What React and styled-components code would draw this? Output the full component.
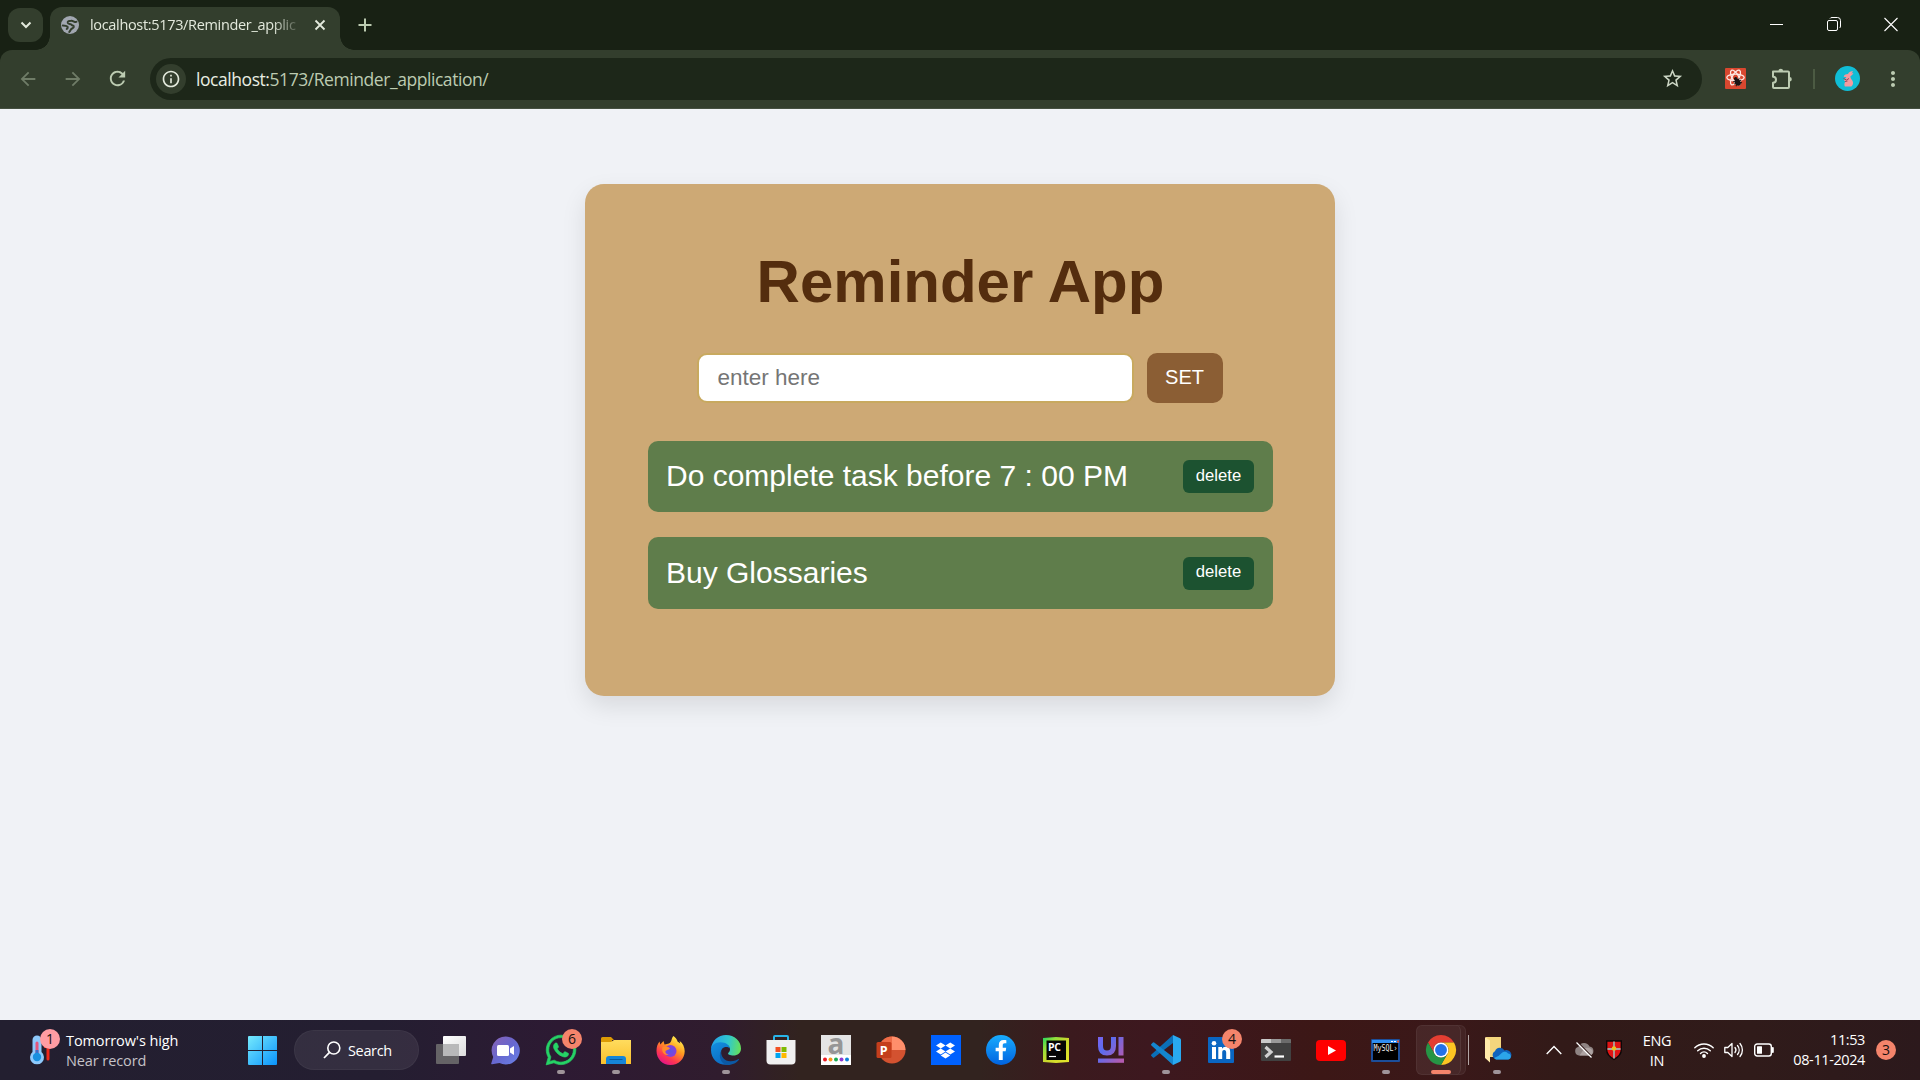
import React from "react";
import styled, { createGlobalStyle, css } from "styled-components";
import { MdArrowBack, MdArrowForward, MdRefresh, MdInfoOutline, MdStarOutline, MdMoreVert } from "react-icons/md";
import { FaWhatsapp, FaDropbox, FaFacebookF } from "react-icons/fa";

const Global = createGlobalStyle`
  * { box-sizing: border-box; }
  body { margin: 0; background: #f0f2f6; overflow: hidden; }
  svg { display: block; flex: none; overflow: visible; }
`;

const ui = css`font-family: "Open Sans", "Noto Sans", sans-serif;`;
const arial = css`font-family: "Liberation Sans", Arial, sans-serif;`;

const Screen = styled.div`
  width: 1920px;
  height: 1080px;
  display: flex;
  flex-direction: column;
  overflow: hidden;
`;

/* Browser chrome */
const TabStrip = styled.div`
  height: 50px;
  flex: none;
  display: flex;
  align-items: flex-start;
  background: #182114;
  padding: 7px 0 0 8px;
`;
const TabSearch = styled.div`
  width: 35px;
  height: 34px;
  margin: 1px 7px 0 0;
  border-radius: 12px;
  background: #333e2d;
  display: flex;
  align-items: center;
  justify-content: center;
`;
const Tab = styled.div`
  position: relative;
  width: 290px;
  height: 43px;
  border-radius: 12px 12px 0 0;
  background: #333e2d;
  display: flex;
  align-items: center;
  padding: 0 14px 7px 11px;
  &::before, &::after {
    content: "";
    position: absolute;
    bottom: 0;
    width: 14px;
    height: 14px;
  }
  &::before { left: -14px; background: radial-gradient(circle at 0 0, transparent 13.5px, #333e2d 14px); }
  &::after { right: -14px; background: radial-gradient(circle at 100% 0, transparent 13.5px, #333e2d 14px); }
`;
const TabTitle = styled.div`
  ${ui}
  width: 212px;
  margin-left: 11px;
  font-size: 14.5px;
  letter-spacing: -0.33px;
  line-height: 20px;
  color: #e3e9dc;
  white-space: nowrap;
  mask-image: linear-gradient(90deg, #000 182px, transparent 212px);
`;
const TabClose = styled.div`margin-left: auto;`;
const NewTab = styled.div`margin: 11px 0 0 18px;`;
const WindowButtons = styled.div`
  margin: 10px 22px 0 auto;
  display: flex;
  gap: 43px;
`;
const ToolbarBack = styled.div`
  flex: none;
  height: 59px;
  background: #182114;
`;
const Toolbar = styled.div`
  height: 59px;
  border-radius: 12px 12px 0 0;
  background: #333e2d;
  border-bottom: 1px solid #454f40;
  display: flex;
  align-items: center;
  padding: 0 15px 1px 16px;
`;
const NavIcon = styled.div`
  width: 23px;
  margin-right: 22px;
  display: flex;
  justify-content: center;
  color: ${(p) => (p.$dim ? "#6f7c67" : "#bccbb1")};
`;
const AddressBar = styled.div`
  width: 1552px;
  height: 42px;
  margin-left: -1px;
  border-radius: 21px;
  background: #1d2719;
  display: flex;
  align-items: center;
  padding: 0 18px 0 6px;
`;
const SiteInfo = styled.div`
  width: 30px;
  height: 30px;
  border-radius: 50%;
  background: #333e2d;
  display: flex;
  align-items: center;
  justify-content: center;
  color: #e3e9dc;
`;
const Url = styled.div`
  ${ui}
  margin-left: 10px;
  font-size: 17.5px;
  letter-spacing: -0.44px;
  white-space: nowrap;
  color: #bccbb1;
  b { font-weight: 400; color: #e9eee2; }
`;
const StarSlot = styled.div`margin-left: auto; color: #ccd6c4;`;
const Extensions = styled.div`
  display: flex;
  align-items: center;
  margin-left: auto;
`;
const Separator = styled.div`
  width: 2px;
  height: 20px;
  background: #4c5b43;
  margin: 0 20px 0 20px;
`;

/* Page */
const Page = styled.main`
  flex: 1;
  display: flex;
  justify-content: center;
  align-items: flex-start;
  padding-top: 75px;
  background: #f0f2f6;
`;
const Card = styled.section`
  ${arial}
  width: 750px;
  height: 512px;
  border-radius: 19px;
  background: #cda975;
  box-shadow: 0 10px 25px rgba(0, 0, 0, 0.1);
  padding: 63px 62px 0 63px;
`;
const Heading = styled.h1`
  margin: 0;
  font-size: 60px;
  line-height: 69px;
  font-weight: 700;
  text-align: center;
  color: #542d0e;
`;
const Form = styled.form`
  display: flex;
  align-items: center;
  justify-content: center;
  gap: 13px;
  margin: 37px 2px 0 0;
  height: 50px;
`;
const Field = styled.input`
  ${arial}
  width: 437px;
  height: 50px;
  border: 2px solid #c8a95f;
  border-radius: 10px;
  background: #fff;
  padding: 0 18px 1px 19px;
  font-size: 22.5px;
  outline: none;
  &::placeholder { color: #757575; opacity: 1; }
`;
const SetButton = styled.button`
  ${arial}
  width: 76px;
  height: 50px;
  border: 0;
  border-radius: 10px;
  background: #8b5e34;
  color: #fff;
  font-size: 20px;
  padding: 0 0 1px;
`;
const List = styled.ul`
  list-style: none;
  margin: 38px 0 0;
  padding: 0;
  display: flex;
  flex-direction: column;
  gap: 25px;
`;
const Item = styled.li`
  height: 71px;
  border-radius: 10px;
  background: #5f7d4b;
  color: #fff;
  display: flex;
  align-items: center;
  justify-content: space-between;
  padding: 0 19px 0 18px;
  font-size: 30px;
  &:nth-child(2) { height: 72px; }
`;
const ItemText = styled.span`
  line-height: 34px;
  padding-bottom: 1px;
`;
const DeleteButton = styled.button`
  ${arial}
  width: 71px;
  height: 33px;
  border: 0;
  border-radius: 6px;
  background: #1c5230;
  color: #fff;
  font-size: 16.67px;
  padding: 0 0 2px;
`;

/* Taskbar */
const Taskbar = styled.footer`
  ${ui}
  height: 60px;
  flex: none;
  display: flex;
  align-items: center;
  color: #fff;
  background: linear-gradient(90deg, #231f30 0, #241e31 380px, #2d1a33 560px, #301c2e 720px, #32231f 800px, #32231f 980px, #3b1a1e 1070px, #3d181f 1150px, #3c1716 1320px, #3a1819 1450px, #321a18 1560px, #301b1a 1750px, #2c191c 1920px);
`;
const Weather = styled.div`
  display: flex;
  align-items: center;
  width: 234px;
  padding-left: 26px;
`;
const WeatherIcon = styled.div`
  position: relative;
  width: 40px;
  height: 46px;
  display: flex;
  align-items: center;
`;
const Lines = styled.div`
  display: flex;
  flex-direction: column;
  align-items: ${(p) => p.$align || "flex-start"};
  white-space: nowrap;
  font-size: ${(p) => p.$size || 14}px;
  letter-spacing: ${(p) => p.$track || 0}px;
  line-height: 20px;
  padding-top: ${(p) => p.$drop || 0}px;
`;
const Muted = styled.span`color: #c5c3c8;`;
const Start = styled.div`
  width: 60px;
  padding-left: 14px;
`;
const Search = styled.div`
  width: 125px;
  height: 40px;
  border-radius: 20px;
  background: rgba(255, 255, 255, 0.075);
  border: 1px solid rgba(255, 255, 255, 0.04);
  display: flex;
  align-items: center;
  gap: 7px;
  padding-left: 28px;
  font-size: 14.5px;
  letter-spacing: -0.35px;
`;
const Apps = styled.div`
  display: flex;
  margin-left: 4px;
`;
const Slot = styled.div`
  position: relative;
  width: 55px;
  height: 60px;
  flex: none;
  display: flex;
  align-items: center;
  justify-content: center;
  &::after {
    content: "";
    position: absolute;
    bottom: 6px;
    width: ${(p) => (p.$active ? 20 : 8)}px;
    height: 4px;
    border-radius: 2px;
    background: ${(p) => (p.$active ? "#f4846b" : p.$running ? "#9f949a" : "transparent")};
  }
`;
const ActiveTile = styled.div`
  position: relative;
  width: 50px;
  height: 50px;
  border-radius: 6px;
  background: rgba(255, 255, 255, 0.05);
  border: 1px solid rgba(255, 255, 255, 0.05);
  display: flex;
  align-items: center;
  padding-left: 9px;
  &::after {
    content: "";
    position: absolute;
    top: -1px;
    left: -1px;
    width: 44px;
    height: 50px;
    border-radius: 6px;
    background: rgba(255, 255, 255, 0.02);
    border-right: 1px solid rgba(255, 255, 255, 0.08);
  }
`;
const Badge = styled.div`
  position: absolute;
  ${(p) => p.$pos}
  width: 20px;
  height: 20px;
  border-radius: 50%;
  background: ${(p) => p.$color || "#f4846b"};
  color: #151010;
  font-size: 14px;
  line-height: 19px;
  text-align: center;
`;
const WindowDivider = styled.div`
  width: 1px;
  height: 30px;
  align-self: center;
  background: #b3a6a6;
`;
const Tray = styled.div`
  display: flex;
  align-items: center;
  margin-left: auto;
  padding-right: 24px;
`;
const TrayItem = styled.div`
  flex: none;
  display: flex;
  margin-left: ${(p) => p.$ml}px;
`;
const Language = styled.div`
  width: 40px;
  margin-left: 15px;
`;
const Clock = styled.div`
  width: 80px;
  margin-left: 12px;
  padding-right: 1px;
`;
const Count = styled.div`
  width: 20px;
  height: 20px;
  margin-left: 10px;
  border-radius: 50%;
  background: #f4846b;
  color: #151010;
  font-size: 14px;
  line-height: 20px;
  text-align: center;
`;

const Svg = ({ w = 30, h = w, vb, children, ...rest }) => (
  <svg width={w} height={h} viewBox={vb || `0 0 ${w} ${h}`} fill="none" {...rest}>{children}</svg>
);

const Globe = () => (
  <Svg w={18}>
    <circle cx="9" cy="9" r="9" fill="#a2a7b1" />
    <path d="M15.500 5.800C14 7 12.500 4.500 10 4.800 7.500 5 6.300 5.600 6.800 7c.5 1.300 3 .6 3.800 1.800.6 1 2.600.6 2.200 2.200-.4 1.200-2 1.300-2.800 2.300-.6.800-.8 2-1.800 2.700M1.800 9.500c1.500 0 3.700 0 4.700 1.200.6.800-.1 1.800-.8 2.300" stroke="#333e2d" strokeWidth="2" strokeLinecap="round" />
  </Svg>
);
const ReactExtension = () => (
  <Svg w={21}>
    <rect width="21" height="21" rx="1" fill="#d9472f" />
    <g stroke="#ffe9e4" strokeWidth="1.300">
      <ellipse cx="10.5" cy="9.500" rx="8.700" ry="3.300" />
      <ellipse cx="10.5" cy="9.500" rx="8.200" ry="3.300" transform="rotate(60 10.5 9.5)" />
      <ellipse cx="10.5" cy="9.500" rx="8.200" ry="3.300" transform="rotate(120 10.5 9.5)" />
    </g>
    <g transform="rotate(-30 12 13)" fill="#1a1413">
      <ellipse cx="12" cy="14.500" rx="2.800" ry="3.600" />
      <circle cx="12" cy="10.300" r="1.700" />
      <path d="M8.500 11.500l7 5.500M15.500 11.500l-7 5.500M8 14.300h8" stroke="#1a1413" strokeWidth=".9" />
    </g>
  </Svg>
);
const Puzzle = () => (
  <Svg w={22}>
    <path d="M2 3.500h15a1 1 0 0 1 1 1V19a1 1 0 0 1-1 1H3a1 1 0 0 1-1-1v-4.200a3 3 0 0 0 0-6z" stroke="#bccbb1" strokeWidth="2" strokeLinejoin="round" />
    <path d="M7.500 3a2.300 2.300 0 0 1 4.600 0zM18.500 9a2.300 2.300 0 0 1 0 4.600z" fill="#bccbb1" />
  </Svg>
);
const Avatar = () => (
  <Svg w={25}>
    <circle cx="12.5" cy="12.5" r="12.5" fill="#10bdd6" />
    <path d="M18 5.500c-2-.5-4 .5-5 2.500-2 0-3.500.8-4.300 2.200.4.800 1.500 1 2.600.9-.6 1.300-1.800 2-2.300 3.500l1.500.7c-1 1.600-1.600 3.500-.6 5.200h6.500c2-1.600 2.300-4.500.6-6.500-1-1.200-1.700-2.300-1.600-3.800 1.500-1 2.700-2 3-3.200-1 .1-1.700.4-2.400.8.8-.7 1.500-1.400 2-2.300z" fill="#f29aa0" />
    <path d="M8.500 12.500l3 1.500 2.500-1.500M10 15.500l2.500-.5" stroke="#94475a" />
  </Svg>
);

const Thermometer = () => (
  <Svg w={24} h={30}>
    <path d="M22 9v15" stroke="#f0261a" strokeWidth="3" strokeLinecap="round" />
    <path d="M18 12h6" stroke="#f0261a" strokeWidth="2" />
    <path d="M6.500 5.500a4.500 4.500 0 0 1 9 0v12a7 7 0 1 1-9 0z" transform="translate(0 -.5)" fill="#8ec9fb" />
    <path d="M11 8v14" stroke="#e4577c" strokeWidth="3" strokeLinecap="round" />
    <path d="M11 15v7" stroke="#3c6ec7" strokeWidth="3" />
    <circle cx="11" cy="22" r="4.200" fill="#1990df" />
  </Svg>
);
const WindowsLogo = () => (
  <Svg w={29}>
    <defs><linearGradient id="win" x1="0" y1="0" x2="29" y2="29" gradientUnits="userSpaceOnUse"><stop stopColor="#76eafd" /><stop offset="1" stopColor="#0a93fb" /></linearGradient></defs>
    <path d="M1 0h13v14H0V1a1 1 0 0 1 1-1zM15 0h13a1 1 0 0 1 1 1v13H15zM0 15h14v14H1a1 1 0 0 1-1-1zM15 15h14v13a1 1 0 0 1-1 1H15z" fill="url(#win)" />
  </Svg>
);
const TaskView = () => (
  <Svg w={30} h={28}>
    <defs><linearGradient id="tv" x1="0" y1="0" x2="1" y2="1"><stop stopColor="#fff" /><stop offset="1" stopColor="#dcdcdc" /></linearGradient></defs>
    <rect y="8" width="23" height="20" rx="1" fill="#656366" />
    <rect x="7" width="23" height="20" rx="1" fill="url(#tv)" />
    <path d="M7 8h16v12H7z" fill="#b8b8b9" />
  </Svg>
);
const Chat = () => (
  <Svg w={29}>
    <defs><linearGradient id="chat" x1="0" y1="0" x2="1" y2="1"><stop stopColor="#8a62b4" /><stop offset=".5" stopColor="#6767cf" /><stop offset="1" stopColor="#6a83e8" /></linearGradient></defs>
    <path d="M14.500 0.500a14 14 0 1 1-6 26.500L1 28.200c-.8.100-1-.3-.7-1L2.200 21A14 14 0 0 1 14.500.5z" fill="url(#chat)" />
    <rect x="6" y="9" width="12" height="11" rx="1.500" fill="#fff" />
    <path d="M19 12.500l4-2.500v9l-4-2.500z" fill="#fff" />
  </Svg>
);
const Folder = () => (
  <Svg w={30} h={27}>
    <defs><linearGradient id="fold" x1="0" y1="0" x2="0" y2="1"><stop stopColor="#ffdc5e" /><stop offset="1" stopColor="#fbc02c" /></linearGradient></defs>
    <path d="M0 1.500A1.500 1.500 0 0 1 1.500 0H10l3 3h-2v4H0z" fill="#dc9b05" />
    <path d="M0 5h10l3-2h17v24H0z" fill="url(#fold)" />
    <path d="M5 27v-5a3 3 0 0 1 3-3h14a3 3 0 0 1 3 3v5z" fill="#1685d8" />
    <path d="M8.500 22.500h13" stroke="#0b5b9e" />
  </Svg>
);
const Firefox = () => (
  <Svg w={29}>
    <defs>
      <linearGradient id="ff" x1="24" y1="2" x2="8" y2="28" gradientUnits="userSpaceOnUse"><stop stopColor="#fff44f" /><stop offset=".4" stopColor="#ff9a20" /><stop offset=".75" stopColor="#ff3750" /><stop offset="1" stopColor="#e31587" /></linearGradient>
      <radialGradient id="ffg"><stop stopColor="#5c53e6" /><stop offset="1" stopColor="#8a3fd8" /></radialGradient>
    </defs>
    <path d="M17.500 0c2 1.500 3.500 3.400 4.200 5.700 1 .2 1.800.9 2.500 1.800 0-1-.4-2-.8-2.800 3.400 2.500 5.300 6.300 5.300 10.500C28.700 22.800 22.500 29 14.500 29S.5 22.800.5 15c0-4.300 1-7 3-9.500l.8 3L7.500 5l1 3.500c3.500-.8 6-.5 7-4.500.3-1.500 1-3 2-4z" fill="url(#ff)" />
    <circle cx="14.500" cy="15" r="6" fill="url(#ffg)" />
    <path d="M6.500 11c2.500-1 6-.5 7.500 1.500-1 1.500-3 1-4.500 2.500-.5 2 1.500 3.500 3.500 3.600-3.600 1.400-8-1.600-6.500-7.600z" fill="#ff8a2b" />
  </Svg>
);
const Edge = () => (
  <Svg w={30}>
    <defs>
      <linearGradient id="ea" x1="2" y1="8" x2="29" y2="12" gradientUnits="userSpaceOnUse"><stop stopColor="#25a5e6" /><stop offset=".55" stopColor="#30c7cf" /><stop offset="1" stopColor="#63df60" /></linearGradient>
      <linearGradient id="eb" x1="2" y1="10" x2="14" y2="30" gradientUnits="userSpaceOnUse"><stop stopColor="#128bdc" /><stop offset="1" stopColor="#0c69c0" /></linearGradient>
    </defs>
    <path d="M0 13.500C.9 5.800 7.200 0 15 0c8.500 0 15 6 15 13.500 0 4.800-3.500 7-7.500 7-3.600 0-6-1-5.300-2.500 1.600-1.200 1.800-2.600 1.800-4C19 11 15.500 8.500 11 8.500c-5 0-8.700 2.500-11 5z" fill="url(#ea)" />
    <path d="M0 15C0 10.500 4 7.300 9.500 7.300c5.500 0 9 3 9.500 6.200-1.600-2-6-2.200-8 .5-3.500 5 0 14 7 15.500C8.500 31.500 0 25 0 15z" fill="url(#eb)" />
    <path d="M10.300 16c-.8 6 3.700 10.500 9.200 10.300 4 0 6.300-1.600 8-2.300.6 0 .6.300.4.700C26 27.500 21.500 30 17 30 10.500 30 6.500 21 10.300 16z" fill="#0c59a4" />
  </Svg>
);
const Store = () => (
  <Svg w={30}>
    <path d="M8 6V2a1 1 0 0 1 1-1h12a1 1 0 0 1 1 1v4" stroke="#28b5ea" strokeWidth="2" />
    <path d="M0.500 5h29v20.500a4 4 0 0 1-4 4h-21a4 4 0 0 1-4-4z" fill="#f0f0f0" />
    <path fill="#f25022" d="M9.500 12h5v5h-5z" /><path fill="#7fba00" d="M15.500 12h5v5h-5z" />
    <path fill="#00a4ef" d="M9.500 18h5v5h-5z" /><path fill="#ffb900" d="M15.500 18h5v5h-5z" />
  </Svg>
);
const Amazon = () => (
  <Svg w={30}>
    <path d="M0 0h30v30H0z" fill="#fff" /><path d="M0 0h30v20H0z" fill="#e4e4e4" />
    <text x="15" y="18.500" textAnchor="middle" fontFamily="Open Sans, sans-serif" fontWeight="700" fontSize="28" fill="#969696">a</text>
    {["#ec1c24", "#f79a1f", "#1aab52", "#8d3ad6", "#0f81d8"].map((c, i) => <circle key={c} cx={4 + i * 5.5} cy="24.500" r="2" fill={c} />)}
  </Svg>
);
const PowerPoint = () => (
  <Svg w={30}>
    <circle cx="16" cy="15" r="13.500" fill="#d35230" />
    <path d="M16 1.500a13.500 13.500 0 0 0-13.500 13.500H16z" fill="#ed6c47" />
    <path d="M16 1.500a13.500 13.500 0 0 1 13.500 13.500H16z" fill="#ff8f6b" />
    <rect x="0.500" y="7" width="15" height="16" rx="1.500" fill="#c43e1c" />
    <text x="7.800" y="19.500" textAnchor="middle" fontFamily="Open Sans, sans-serif" fontWeight="700" fontSize="12.500" fill="#fff">P</text>
  </Svg>
);
const DropboxTile = styled.div`
  width: 30px;
  height: 30px;
  background: #0061fe;
  color: #fff;
  display: flex;
  align-items: center;
  justify-content: center;
`;
const FacebookTile = styled.div`
  width: 30px;
  height: 30px;
  border-radius: 50%;
  background: linear-gradient(#18acfe, #0163e0);
  color: #fff;
  display: flex;
  align-items: center;
  justify-content: center;
`;
const PyCharm = () => (
  <Svg w={26}>
    <defs><linearGradient id="pc" x1="0" y1="0" x2="1" y2="1"><stop stopColor="#21d760" /><stop offset=".25" stopColor="#8fe03c" /><stop offset=".5" stopColor="#c9d82d" /><stop offset="1" stopColor="#e6e62a" /></linearGradient></defs>
    <path d="M0 1l13-1 13 1v24l-13 1-13-1z" fill="url(#pc)" />
    <path d="M3.500 3.500h19.500v19.500H3.500z" fill="#050505" />
    <text x="5" y="13.500" fontFamily="Open Sans, sans-serif" fontWeight="700" fontSize="10.500" letterSpacing="-.3" fill="#fff">PC</text>
    <path d="M6 19.500h7" stroke="#fff" strokeWidth="1.200" />
  </Svg>
);
const UiLogo = () => (
  <Svg w={26}>
    <defs><linearGradient id="uil" x1="0" y1="0" x2="26" y2="20" gradientUnits="userSpaceOnUse"><stop stopColor="#7b63ee" /><stop offset=".35" stopColor="#5a6cf0" /><stop offset="1" stopColor="#b35bb0" /></linearGradient></defs>
    <path d="M2.500 0v9c0 5 2.500 7 6.500 7s6.500-2 6.500-7V0M23 0v18.500" stroke="url(#uil)" strokeWidth="5" />
    <path d="M0 21.500h26v4.300H0z" fill="url(#uil)" />
  </Svg>
);
const VsCode = () => (
  <Svg w={30}>
    <path d="M22 0l7 3.300a2 2 0 0 1 1 1.700v20a2 2 0 0 1-1 1.700L22 30z" fill="#29a9f0" />
    <path d="M22 0v8L3.200 22.500a1 1 0 0 1-1.300 0L.4 21a1 1 0 0 1 0-1.500z" fill="#0b6fb8" />
    <path d="M22 30v-8L3.200 7.500a1 1 0 0 0-1.300 0L.4 9a1 1 0 0 0 0 1.500z" fill="#1486cf" />
  </Svg>
);
const LinkedIn = () => (
  <Svg w={26}>
    <rect width="26" height="26" rx="1" fill="#0a66c2" />
    <circle cx="6" cy="6.300" r="2.300" fill="#fff" />
    <path d="M4 10h4v12H4zM10.300 10H14v1.700c.7-1.200 2-2 3.800-2 3.600 0 4.400 2.400 4.400 5.600V22h-4v-6c0-1.500-.3-2.900-2-2.900S14.200 14.400 14.200 16v6h-3.900z" fill="#fff" />
  </Svg>
);
const Terminal = () => (
  <Svg w={30} h={22}>
    <rect width="30" height="22" rx="1" fill="#414141" />
    <path d="M1 0h9v4H0V1a1 1 0 0 1 1-1z" fill="#c9c9c9" /><path d="M10 0h10v4H10z" fill="#999" /><path d="M20 0h9a1 1 0 0 1 1 1v3H20z" fill="#6b6b6b" />
    <path d="M4.500 8l5.500 5-5.500 5" stroke="#cfcfcf" strokeWidth="3.200" /><path d="M13.500 17.500H23" stroke="#fff" strokeWidth="2.200" />
  </Svg>
);
const YouTube = () => (
  <Svg w={30} h={21}>
    <rect width="30" height="21" rx="4" fill="#f00" /><path d="M12 6l8 4.500-8 4.500z" fill="#fff" />
  </Svg>
);
const MySql = () => (
  <Svg w={29} h={23}>
    <rect width="29" height="23" rx="1" fill="#1c4e9a" /><path d="M1 1h27v3H1z" fill="#2f8df0" />
    <path d="M2 4h25v17H2z" fill="#000" />
    <path d="M20 2.500h2M23 2.500h2" stroke="#fff" /><path d="M26 1.500h2v2h-2z" fill="#e0522d" />
    <text x="2.500" y="12" fontFamily="DejaVu Sans Mono, monospace" fontSize="8.200" textLength="24" lengthAdjust="spacingAndGlyphs" fill="#eee">MySQL›</text>
  </Svg>
);
const Chrome = () => (
  <Svg w={30} vb="0 0 48 48">
    <path d="M24 0A24 24 0 0 0 3.200 12l10.400 18A12 12 0 0 1 24 12h20.800A24 24 0 0 0 24 0z" fill="#e33b2e" />
    <path d="M34.400 30L24 48A24 24 0 0 0 44.800 12H24a12 12 0 0 1 10.400 18z" fill="#fcc31e" />
    <path d="M13.600 30L3.200 12A24 24 0 0 0 24 48l10.400-18a12 12 0 0 1-20.800 0z" fill="#229342" />
    <circle cx="24" cy="24" r="12" fill="#fff" /><circle cx="24" cy="24" r="9.500" fill="#1f6fe8" />
  </Svg>
);
const CloudFolder = () => (
  <Svg w={26} h={28}>
    <path d="M2 1h15v20H2z" fill="#f4d67d" /><path d="M1 1l5 3.500v22L1 22z" fill="#ffeaa9" />
    <path d="M12 23.500a4.500 4.500 0 0 1-1-8.300 5.200 5.200 0 0 1 9.500-.7 4.700 4.700 0 0 1 4 9z" fill="#0f63bd" />
    <path d="M12 23.500h11.500a3 3 0 0 0 .5-6 4 4 0 0 0-6-.8 16 16 0 0 1-8 5.300z" fill="#2ba5ea" />
  </Svg>
);

const CrossedCloud = () => (
  <Svg w={20} h={18}>
    <path d="M5 14.500a4.500 4.500 0 0 1-.5-8.800 6 6 0 0 1 11-.2 4.600 4.600 0 0 1 .5 9z" fill="#8f8483" />
    <path d="M5.500 14.500H16a3.500 3.500 0 0 0 1-6.500 6 6 0 0 0-7 0z" fill="#aea3a2" />
    <path d="M3.500 1l15 15.500" stroke="#321a18" strokeWidth="1.500" /><path d="M2.500 1.500l15 15" stroke="#fff" strokeWidth="1.300" />
  </Svg>
);
const Shield = () => (
  <Svg w={16} h={20}>
    <path d="M.7 1h14.600v9c0 4-3 7-7.300 9.400C3.700 17 .7 14 .7 10z" fill="#e01414" stroke="#0a0808" strokeWidth="1.400" />
    <path d="M8 1.500v17M1.500 9h13" stroke="#aaa6a2" strokeWidth="1.800" /><circle cx="8" cy="8.500" r="2.300" fill="#edc21f" />
  </Svg>
);
const Wifi = () => (
  <Svg w={20} h={16} stroke="#fff" strokeWidth="1.400" strokeLinecap="round">
    <path d="M.8 5.800a13 13 0 0 1 18.400 0M3.700 8.800a9 9 0 0 1 12.600 0M6.500 11.500a5 5 0 0 1 7 0" /><circle cx="10" cy="14" r="1.200" fill="#fff" />
  </Svg>
);
const Speaker = () => (
  <Svg w={20} h={16} stroke="#fff" strokeWidth="1.300" strokeLinecap="round" strokeLinejoin="round">
    <path d="M.8 5.500h3L8 1.500v13l-4.200-4h-3zM11 5.500a4 4 0 0 1 0 5M13.500 3.500a7 7 0 0 1 0 9M16 1.500a10 10 0 0 1 0 13" />
  </Svg>
);
const Battery = () => (
  <Svg w={20} h={14}>
    <rect x=".7" y="1" width="16.600" height="12" rx="2.500" stroke="#fff" strokeWidth="1.400" /><rect x="3" y="3.300" width="5" height="7.400" rx=".5" fill="#fff" /><path d="M18.800 5v4" stroke="#fff" strokeWidth="2" strokeLinecap="round" />
  </Svg>
);

const apps = [
  { id: "taskview", icon: <TaskView /> },
  { id: "chat", icon: <Chat /> },
  { id: "whatsapp", icon: <FaWhatsapp size={34} color="#25d366" stroke="#25d366" strokeWidth={10} />, running: true, badge: 6 },
  { id: "files", icon: <Folder />, running: true },
  { id: "firefox", icon: <Firefox /> },
  { id: "edge", icon: <Edge />, running: true },
  { id: "store", icon: <Store /> },
  { id: "amazon", icon: <Amazon /> },
  { id: "powerpoint", icon: <PowerPoint /> },
  { id: "dropbox", icon: <DropboxTile><FaDropbox size={19} /></DropboxTile> },
  { id: "facebook", icon: <FacebookTile><FaFacebookF size={20} /></FacebookTile> },
  { id: "pycharm", icon: <PyCharm /> },
  { id: "ui", icon: <UiLogo /> },
  { id: "vscode", icon: <VsCode />, running: true },
  { id: "linkedin", icon: <LinkedIn />, badge: 4 },
  { id: "terminal", icon: <Terminal /> },
  { id: "youtube", icon: <YouTube /> },
  { id: "mysql", icon: <MySql />, running: true },
  { id: "chrome", icon: <ActiveTile><Chrome /></ActiveTile>, active: true },
];
const reminders = ["Do complete task before 7 : 00 PM", "Buy Glossaries"];

export default function App() {
  return (
    <Screen>
      <Global />
      <TabStrip>
        <TabSearch>
          <Svg w={12} h={8}><path d="M1.500 1.500L6 6l4.500-4.500" stroke="#e3e9dc" strokeWidth="2" /></Svg>
        </TabSearch>
        <Tab>
          <Globe />
          <TabTitle>localhost:5173/Reminder_applic</TabTitle>
          <TabClose><Svg w={12}><path d="M1.500 1.500l9 9M10.500 1.500l-9 9" stroke="#e3e9dc" strokeWidth="1.800" /></Svg></TabClose>
        </Tab>
        <NewTab><Svg w={14}><path d="M7 .5v13M.5 7h13" stroke="#bccbb1" strokeWidth="2" /></Svg></NewTab>
        <WindowButtons>
          <Svg w={14}><path d="M0 7.500h13" stroke="#fff" /></Svg>
          <Svg w={14} stroke="#fff"><rect x=".5" y="3.500" width="10" height="10" rx="1.500" /><path d="M3 1.500Q3.500.5 5 .5h5.500a3 3 0 0 1 3 3V9q0 1.500-1 2" /></Svg>
          <Svg w={14}><path d="M.5 1l13 13M13.500 1L.5 14" stroke="#fff" strokeWidth="1.100" /></Svg>
        </WindowButtons>
      </TabStrip>
      <ToolbarBack>
        <Toolbar>
          <NavIcon $dim><MdArrowBack size={22} /></NavIcon>
          <NavIcon $dim><MdArrowForward size={22} /></NavIcon>
          <NavIcon><MdRefresh size={23} /></NavIcon>
          <AddressBar>
            <SiteInfo><MdInfoOutline size={20} /></SiteInfo>
            <Url><b>localhost:</b>5173/Reminder_application/</Url>
            <StarSlot><MdStarOutline size={23} /></StarSlot>
          </AddressBar>
          <Extensions>
            <ReactExtension />
            <TrayItem $ml={25}><Puzzle /></TrayItem>
            <Separator />
            <Avatar />
            <TrayItem $ml={21}><MdMoreVert size={24} color="#bccbb1" /></TrayItem>
          </Extensions>
        </Toolbar>
      </ToolbarBack>

      <Page>
        <Card>
          <Heading>Reminder App</Heading>
          <Form>
            <Field placeholder="enter here" />
            <SetButton type="button">SET</SetButton>
          </Form>
          <List>
            {reminders.map((text) => (
              <Item key={text}>
                <ItemText>{text}</ItemText>
                <DeleteButton>delete</DeleteButton>
              </Item>
            ))}
          </List>
        </Card>
      </Page>

      <Taskbar>
        <Weather>
          <WeatherIcon>
            <Thermometer />
            <Badge $color="#ff9ca3" $pos="left: 14px; top: 2px;">1</Badge>
          </WeatherIcon>
          <Lines $size={14.5} $track={-0.1} $drop={2}><span>Tomorrow's high</span><Muted>Near record</Muted></Lines>
        </Weather>
        <Start><WindowsLogo /></Start>
        <Search>
          <Svg w={18}><circle cx="10.800" cy="7" r="6" stroke="#fff" strokeWidth="1.600" /><path d="M6.500 11.300L1 17" stroke="#fff" strokeWidth="1.800" /></Svg>
          Search
        </Search>
        <Apps>
          {apps.map((a) => (
            <Slot key={a.id} $running={a.running} $active={a.active}>
              {a.icon}
              {a.badge && <Badge $pos="right: 6px; top: 9px;">{a.badge}</Badge>}
            </Slot>
          ))}
          <WindowDivider />
          <Slot $running><CloudFolder /></Slot>
        </Apps>
        <Tray>
          <Svg w={16} h={10}><path d="M.7 9L8 1.500 15.300 9" stroke="#fff" strokeWidth="1.400" /></Svg>
          <TrayItem $ml={12}><CrossedCloud /></TrayItem>
          <TrayItem $ml={12}><Shield /></TrayItem>
          <Language><Lines $align="center" $size={14.5} $track={-0.3} $drop={1}><span>ENG</span><span>IN</span></Lines></Language>
          <TrayItem $ml={17}><Wifi /></TrayItem>
          <TrayItem $ml={10}><Speaker /></TrayItem>
          <TrayItem $ml={10}><Battery /></TrayItem>
          <Clock><Lines $align="flex-end" $size={14.5} $track={-0.4}><span>11:53</span><span>08-11-2024</span></Lines></Clock>
          <Count>3</Count>
        </Tray>
      </Taskbar>
    </Screen>
  );
}
